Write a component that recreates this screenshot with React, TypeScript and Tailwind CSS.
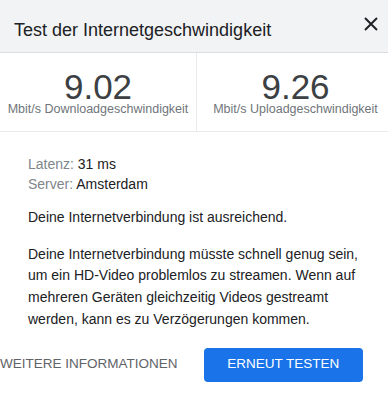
const Stat = ({ value, label, divider }: { value: string; label: string; divider?: boolean }) => {
  return (
    <div className={`w-[197px] shrink-0 flex flex-col items-center pt-[19px] pb-[15px] ${divider ? "border-r border-[#e8eaed]" : ""}`}>
      <div className="text-[35px] leading-[30px] text-[#3c4043]">{value}</div>
      <div className="text-[12.5px] leading-[14px] text-[#70757a] whitespace-nowrap">{label}</div>
    </div>
  );
};

export default function App() {
  return (
    <div className="w-[388px] h-[401px] bg-white overflow-hidden font-['Liberation_Sans',Arial,sans-serif]">
      <div className="h-[53px] bg-[#f1f3f4] border-b border-[#dadce0] flex items-start justify-between pl-[14px] pr-[10px] pt-[18px]">
        <h1 className="text-[18px] leading-[24px] text-[#202124]">Test der Internetgeschwindigkeit</h1>
        <button className="w-[14px] h-[14px] mt-[-1px] mr-[0px]" aria-label="Schließen">
          <svg width="14" height="14" viewBox="0 0 14 14" fill="none" stroke="#202124" strokeWidth="2">
            <path d="M1 1 L13 13 M13 1 L1 13" />
          </svg>
        </button>
      </div>

      <div className="flex border-b border-[#e8eaed]">
        <Stat value="9.02" label="Mbit/s Downloadgeschwindigkeit" divider />
        <Stat value="9.26" label="Mbit/s Uploadgeschwindigkeit" />
      </div>

      <div className="px-7 pt-[22px] text-[14px] text-[#202124]">
        <div className="leading-[20px]">
          <span className="text-[#80868b]">Latenz:</span> 31 ms
        </div>
        <div className="leading-[20px]">
          <span className="text-[#80868b]">Server:</span> Amsterdam
        </div>
        <p className="mt-[13px] leading-[21.7px]">Deine Internetverbindung ist ausreichend.</p>
        <p className="mt-[15px] leading-[21.7px]">
          Deine Internetverbindung müsste schnell genug sein, um ein HD-Video problemlos zu streamen. Wenn auf mehreren Geräten gleichzeitig Videos gestreamt werden, kann es zu Verzögerungen kommen.
        </p>
      </div>

      <div className="flex justify-end items-center gap-[26px] pr-[25px] mt-[17px]">
        <button className="text-[13.5px] text-[#5f6368] whitespace-nowrap">WEITERE INFORMATIONEN</button>
        <button className="w-[161px] h-[34px] rounded-[4px] bg-[#1a73e8] text-white text-[13.5px]">ERNEUT TESTEN</button>
      </div>
    </div>
  );
}
